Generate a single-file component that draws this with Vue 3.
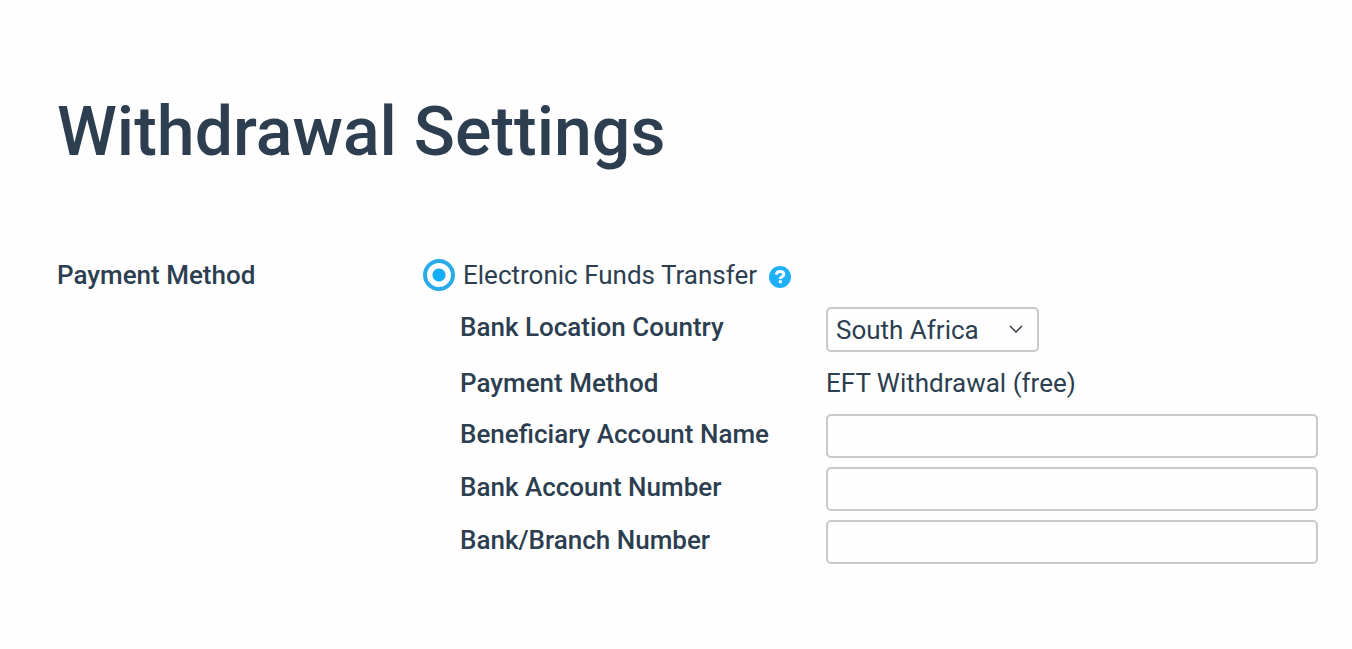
<script setup>
import { ref } from 'vue'

const method = ref('eft')
const country = ref('ZA')

const fields = ref([
  { id: 'beneficiary', label: 'Beneficiary Account Name', value: '' },
  { id: 'account', label: 'Bank Account Number', value: '' },
  { id: 'branch', label: 'Bank/Branch Number', value: '' }
])
</script>

<template>
  <main class="page">
    <h1>Withdrawal Settings</h1>

    <form class="settings" @submit.prevent>
      <div id="method-title" class="section-label">Payment Method</div>

      <div class="section" role="radiogroup" aria-labelledby="method-title">
        <div class="method">
          <input id="eft" v-model="method" type="radio" name="method" value="eft">
          <label for="eft">Electronic Funds Transfer</label>
          <button type="button" class="help" aria-label="Help">
            <svg viewBox="0 0 22 22" width="22" height="22">
              <circle cx="11" cy="11" r="11" fill="#1fb0f8" />
              <path d="M7.2 8.6C7.6 6.6 9 5.5 11.1 5.5c2.2 0 3.7 1.2 3.7 3 0 2.4-3.5 2.2-3.5 4.4" fill="none" stroke="#fff" stroke-width="2.9" />
              <rect x="9.8" y="14.3" width="3" height="2.9" fill="#fff" />
            </svg>
          </button>
        </div>

        <div class="details">
          <div class="row">
            <label for="country">Bank Location Country</label>
            <div class="select">
              <select id="country" v-model="country">
                <option value="ZA">South Africa</option>
              </select>
              <svg class="arrow" viewBox="0 0 14 8" width="14" height="8">
                <path d="M1 1l6 6 6-6" fill="none" stroke="#3c4650" stroke-width="1.6" />
              </svg>
            </div>
          </div>

          <div class="row row-text">
            <span class="name">Payment Method</span>
            <span>EFT Withdrawal (free)</span>
          </div>

          <div v-for="field in fields" :key="field.id" class="row">
            <label :for="field.id">{{ field.label }}</label>
            <input :id="field.id" v-model="field.value" type="text">
          </div>
        </div>
      </div>
    </form>
  </main>
</template>

<style>
body {
  margin: 0;
  background: #fefefe;
}
</style>

<style scoped>
.page {
  padding: 92px 34px 40px 57px;
  font-family: Roboto, sans-serif;
  font-size: 26px;
  line-height: 40px;
  color: #2c3e50;
}

h1 {
  margin: 0 0 83px;
  font-size: 68px;
  font-weight: 500;
  line-height: 80px;
}

.settings {
  display: grid;
  grid-template-columns: 366px 1fr;
}

.section-label,
.row label,
.name {
  font-weight: 500;
}

.method {
  display: flex;
  align-items: center;
  margin-bottom: 12px;
}

.method input {
  appearance: none;
  box-sizing: border-box;
  width: 32px;
  height: 32px;
  margin: 0 8px 0 0;
  border: 4px solid #29abe8;
  border-radius: 50%;
  background: radial-gradient(circle, #14aef7 6px, transparent 7px);
}

.help {
  display: flex;
  margin: 4px 0 0 12px;
  padding: 0;
  border: 0;
  background: none;
}

.details {
  display: grid;
  gap: 9px;
  padding-left: 37px;
}

.row {
  display: grid;
  grid-template-columns: 366px 1fr;
  min-height: 44px;
}

.row-text {
  line-height: 44px;
}

.row input,
select {
  box-sizing: border-box;
  width: 100%;
  height: 44px;
  padding: 0 8px;
  border: 2px solid #c9c9c9;
  border-radius: 5px;
  background: #fefefe;
  font: inherit;
  color: inherit;
}

.select {
  position: relative;
  width: 213px;
}

.select select {
  display: block;
  appearance: none;
  height: 45px;
  padding-right: 40px;
}

.arrow {
  position: absolute;
  top: 18px;
  right: 16px;
  pointer-events: none;
}
</style>
